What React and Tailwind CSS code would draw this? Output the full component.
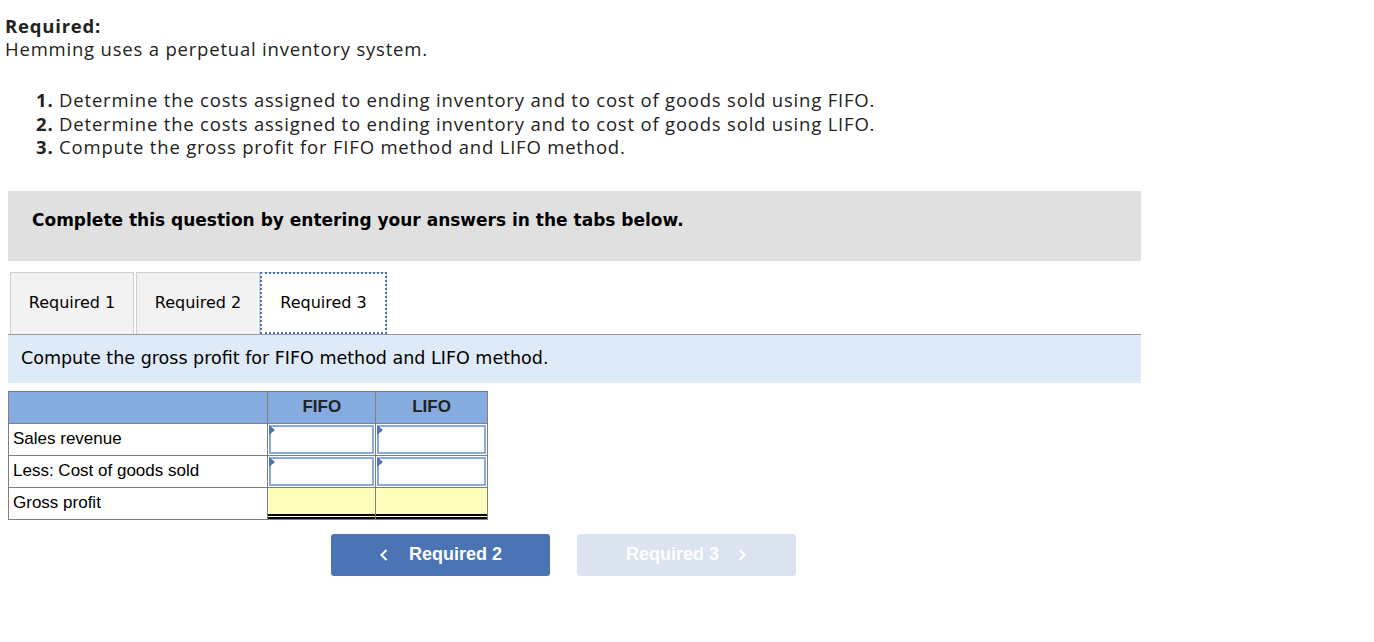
import React from "react";

const head = { fontFamily: "'Open Sans', Lato, sans-serif", letterSpacing: "0.8px" };
const tah = { fontFamily: "'DejaVu Sans', sans-serif" };
const ar = { fontFamily: "'Liberation Sans', Arial, sans-serif" };

function Cell({ input, last }) {
  return (
    <td className={`border border-[#7f7f7f] p-0 h-[32px] ${last ? "w-[112px]" : "w-[108px]"}`}>
      {input && (
        <div className="relative m-[1px] h-[29px] border-2 border-[#8aaadc] bg-white">
          <span className="absolute left-[-2px] top-[-2px] h-0 w-0 border-y-[5px] border-l-[6px] border-y-transparent border-l-[#4a74b4]" />
        </div>
      )}
    </td>
  );
}

function Yellow() {
  return (
    <td className="h-[32px] border border-[#7f7f7f] p-0 align-top">
      <div className="h-[31px] border-b-[5px] border-double border-black bg-[#ffffbb]" />
    </td>
  );
}

export default function App() {
  return (
    <div className="min-h-[642px] bg-white text-black">
      <div className="pl-[5px] pt-[14px] text-[18.5px] leading-[23px] text-[#222]" style={head}>
        <div className="font-bold">Required:</div>
        <div>Hemming uses a perpetual inventory system.</div>
      </div>
      <ol className="mt-[28px] pl-[36px] text-[18.5px] leading-[23.5px] text-[#222]" style={head}>
        <li><b>1.</b> Determine the costs assigned to ending inventory and to cost of goods sold using FIFO.</li>
        <li><b>2.</b> Determine the costs assigned to ending inventory and to cost of goods sold using LIFO.</li>
        <li><b>3.</b> Compute the gross profit for FIFO method and LIFO method.</li>
      </ol>
      <div className="ml-[8px] w-[1133px]">
        <div className="mt-[32px] h-[70px] bg-[#e0e0e0] pl-[24px] pt-[17px] text-[17px] font-bold" style={tah}>
          Complete this question by entering your answers in the tabs below.
        </div>
        <div className="mt-[11px] flex border-b border-[#999] text-[16px]" style={tah}>
          <div className="ml-[2px] flex h-[62px] w-[124px] items-center justify-center border border-b-0 border-[#cfcfcf] bg-[#f2f2f2]">Required 1</div>
          <div className="ml-[2px] flex h-[62px] w-[124px] items-center justify-center border border-b-0 border-[#cfcfcf] bg-[#f2f2f2]">Required 2</div>
          <div className="flex h-[62px] w-[127px] items-center justify-center border border-b-0 border-[#cfcfcf] bg-white outline-2 outline-dotted outline-[#4a74b4] -outline-offset-2">Required 3</div>
        </div>
        <div className="flex h-[48px] items-center bg-[#deeaf7] pl-[13px] text-[17.5px]" style={tah}>
          Compute the gross profit for FIFO method and LIFO method.
        </div>
        <table className="mt-[8px] w-[480px] border-collapse text-[17px]" style={ar}>
          <thead>
            <tr className="h-[32px] bg-[#86abdf]">
              <th className="w-[260px] border border-[#7f7f7f]"></th>
              <th className="w-[108px] border border-[#7f7f7f] font-bold text-[#222]">FIFO</th>
              <th className="w-[112px] border border-[#7f7f7f] font-bold text-[#222]">LIFO</th>
            </tr>
          </thead>
          <tbody>
            <tr>
              <td className="h-[32px] border border-[#7f7f7f] pl-[4px]">Sales revenue</td>
              <Cell input />
              <Cell input last />
            </tr>
            <tr>
              <td className="h-[32px] border border-[#7f7f7f] pl-[4px]">Less: Cost of goods sold</td>
              <Cell input />
              <Cell input last />
            </tr>
            <tr>
              <td className="h-[32px] border border-[#7f7f7f] pl-[4px]">Gross profit</td>
              <Yellow />
              <Yellow />
            </tr>
          </tbody>
        </table>
        <div className="mt-[14px] flex gap-[27px] pl-[323px] text-[18px] font-bold text-white" style={ar}>
          <button className="flex h-[42px] w-[219px] items-center justify-center gap-[20px] rounded-[3px] bg-[#4a74b4]">
            <svg width="10" height="14" viewBox="0 0 10 14"><path d="M7.5 2 L2.5 7 L7.5 12" fill="none" stroke="white" strokeWidth="2" /></svg>
            <span>Required 2</span>
          </button>
          <button className="flex h-[42px] w-[219px] items-center justify-center gap-[18px] rounded-[3px] bg-[#dae3ef]">
            <span>Required 3</span>
            <svg width="10" height="14" viewBox="0 0 10 14"><path d="M2.5 2 L7.5 7 L2.5 12" fill="none" stroke="white" strokeWidth="2" /></svg>
          </button>
        </div>
      </div>
    </div>
  );
}
